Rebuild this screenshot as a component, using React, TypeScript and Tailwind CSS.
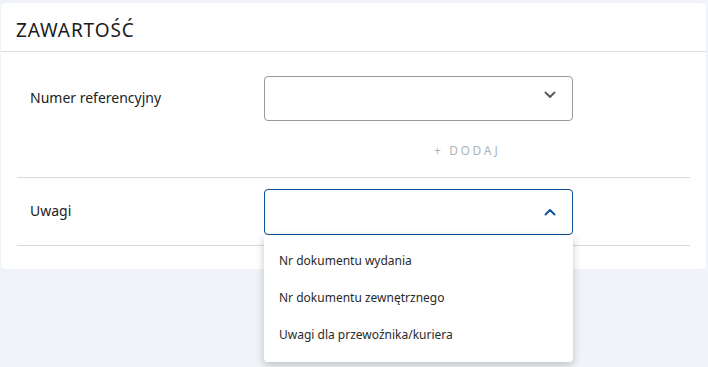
import React from 'react';

const font = { fontFamily: '"Noto Sans", "Open Sans", sans-serif' };

const Chevron = ({ up, className }: { up?: boolean; className?: string }) => (
  <svg viewBox="0 0 12 8" className={className} fill="none" stroke="currentColor" strokeWidth={1.9} strokeLinecap="round" strokeLinejoin="round">
    {up ? <path d="M1.5 6.5 6 2l4.5 4.5" /> : <path d="M1.5 1.5 6 6l4.5-4.5" />}
  </svg>
);

const options = ['Nr dokumentu wydania', 'Nr dokumentu zewnętrznego', 'Uwagi dla przewoźnika/kuriera'];

export default function App() {
  return (
    <div className="w-[708px] h-[367px] overflow-hidden bg-[#f0f4f8] pt-[3px] pl-[1px] pr-[2px]" style={font}>
      <div className="bg-white rounded-[4px] pb-[23px]">
        {/* Header */}
        <div className="h-[49px] flex items-end px-[15px] pb-[11px] border-b border-[#dedede]">
          <h2 className="text-[19px] leading-none text-[#1c1c1c] tracking-[0.9px]">ZAWARTOŚĆ</h2>
        </div>

        <div className="px-[16px]">
          {/* Numer referencyjny */}
          <div className="border-b border-[#d9d9d9] pt-[24px] pb-[16px]">
            <div className="flex items-center">
              <label className="w-[247px] pl-[13px] pb-[2px] text-[14px] text-[#222]">Numer referencyjny</label>
              <div className="w-[309px] h-[45px] border border-[#9a9a9a] rounded-[4px] flex items-center justify-end pr-[16px] pb-[8px]">
                <Chevron className="w-[12px] h-[8px] text-[#5a5a5a]" />
              </div>
            </div>
            <div className="pl-[417px] pt-[16px]">
              <button className="text-[12px] leading-[14px] tracking-[2.6px] text-[#aab4bd]">+ DODAJ</button>
            </div>
          </div>

          {/* Uwagi */}
          <div className="border-b border-[#d9d9d9] pt-[11px] pb-[10px]">
            <div className="flex items-start">
              <label className="w-[247px] pl-[13px] pt-[11px] text-[14px] text-[#222]">Uwagi</label>
              <div className="relative w-[309px]">
                <div className="h-[46px] border border-[#0d4f99] rounded-[4px] flex items-center justify-end pr-[16px]">
                  <Chevron up className="w-[12px] h-[8px] text-[#0d4f99]" />
                </div>
                <ul className="absolute left-0 top-[46px] w-[309px] z-10 bg-white rounded-b-[4px] shadow-[0_3px_8px_rgba(0,0,0,0.22)] pt-[7px] pb-[9px]">
                  {options.map((o) => (
                    <li key={o} className="h-[37px] flex items-center px-[15px] text-[12px] text-[#2a2a2a]">
                      {o}
                    </li>
                  ))}
                </ul>
              </div>
            </div>
          </div>
        </div>
      </div>
    </div>
  );
}
